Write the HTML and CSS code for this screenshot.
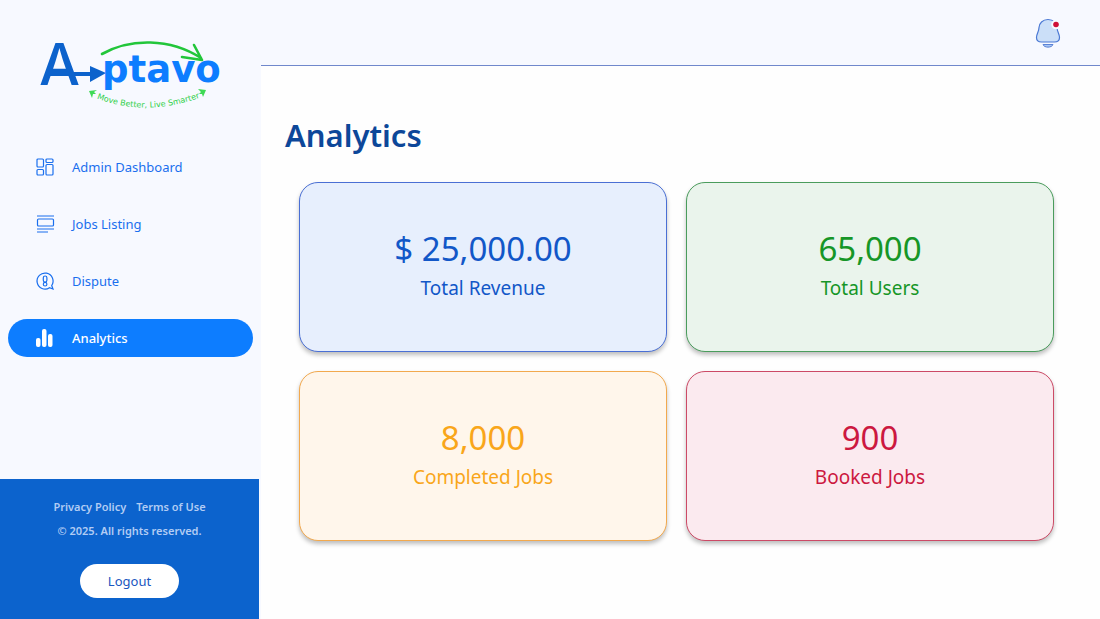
FILE: index.html
```html
<!DOCTYPE html>
<html lang="en">
<head>
<meta charset="utf-8">
<meta name="viewport" content="width=device-width, initial-scale=1">
<title>Aptavo – Analytics</title>
<link rel="stylesheet" href="styles.css">
</head>
<body>
<div class="app">
  <aside class="sidebar">
    <a class="logo" href="#" aria-label="Aptavo home">
      <svg width="200" height="76" viewBox="0 0 200 76">
        <defs><path id="tagline" d="M57 61 Q114 84 175 57"/></defs>
        <path d="M14 36H54V30L70 37L54 46V40H14Z" fill="#0c62cc"/>
        <text class="logo-a" x="3" y="49">A</text>
        <text class="logo-name" x="66" y="46">ptavo</text>
        <path d="M66 18C94 2 134 2 165 22M158 9L166 24L146 21" fill="none" stroke="#22c63a" stroke-width="2.600" stroke-linecap="round" stroke-linejoin="round"/>
        <text class="logo-tagline"><textPath href="#tagline" startOffset="4">Move Better, Live Smarter</textPath></text>
        <path d="M53 55L61 54L58 56L60 58L57 58L56 62ZM170 54L162 53L165 56L163 58L166 58L167 61Z" fill="#3fda55"/>
      </svg>
    </a>
    <nav class="nav" aria-label="Main">
      <a class="nav-item" href="#">
        <svg class="icon" viewBox="0 0 18 18"><rect x="1" y="1" width="6.5" height="8" rx="1"/><rect x="10" y="1" width="7" height="3.5" rx="1"/><rect x="1" y="11.5" width="6.5" height="5.5" rx="1"/><rect x="10" y="6.5" width="7" height="10.5" rx="1"/></svg>
        <span>Admin Dashboard</span>
      </a>
      <a class="nav-item" href="#">
        <svg class="icon" viewBox="0 0 18 18"><path d="M1 1H18M1 14H18M1 17H12"/><rect x="1.5" y="4" width="16" height="7" rx="1"/></svg>
        <span>Jobs Listing</span>
      </a>
      <a class="nav-item" href="#">
        <svg class="icon" viewBox="0 0 18 18"><path d="M13.5 15.700A8 8 0 1 1 15.700 13.500L17 17Z"/><rect x="7.300" y="4" width="3.600" height="6" rx="1.800"/><circle cx="9.100" cy="12.200" r="1.800"/></svg>
        <span>Dispute</span>
      </a>
      <a class="nav-item active" href="#" aria-current="page">
        <svg class="icon solid" viewBox="0 0 18 18"><rect x="0" y="9" width="4.500" height="9" rx="2"/><rect x="6" y="0" width="4.500" height="18" rx="2"/><rect x="12" y="5" width="4.500" height="13" rx="2"/></svg>
        <span>Analytics</span>
      </a>
    </nav>
    <footer class="side-footer">
      <div class="legal"><a href="#">Privacy Policy</a><a href="#">Terms of Use</a></div>
      <p class="copyright">© 2025. All rights reserved.</p>
      <button class="logout" type="button">Logout</button>
    </footer>
  </aside>
  <header class="topbar">
    <button class="bell" type="button" aria-label="Notifications">
      <svg width="28" height="32" viewBox="0 0 28 32">
        <path d="M9 27.5H19C18 31 10 31 9 27.5Z" fill="#a9c6f2" stroke="#5b82d6"/>
        <path d="M14 2.500C8.500 2.500 5.200 6.400 5 10.500C4.900 15 2.500 17 2.500 20.500C2.500 23.500 4.500 25 7.500 25H20.500C23.500 25 25.500 23.500 25.500 20.500C25.500 17 23.100 15 23 10.500C22.800 6.400 19.500 2.500 14 2.500Z" fill="#cbdff8" stroke="#4a78d4" stroke-width="1.200"/>
        <circle cx="22" cy="7.500" r="4.800" fill="#f7f9ff"/>
        <circle cx="22" cy="7.500" r="2.800" fill="#cf1038"/>
      </svg>
    </button>
  </header>
  <main class="content">
    <h1 class="title">Analytics</h1>
    <div class="cards">
      <section class="card blue"><p class="value">$ 25,000.00</p><h2 class="label">Total Revenue</h2></section>
      <section class="card green"><p class="value">65,000</p><h2 class="label">Total Users</h2></section>
      <section class="card orange"><p class="value">8,000</p><h2 class="label">Completed Jobs</h2></section>
      <section class="card red"><p class="value">900</p><h2 class="label">Booked Jobs</h2></section>
    </div>
  </main>
</div>
</body>
</html>
```

FILE: styles.css
```css
* {
  box-sizing: border-box;
}

body {
  margin: 0;
  font-family: "Noto Sans", "Open Sans", sans-serif;
  background: #fefefe;
}

h1, h2, p {
  margin: 0;
}

a {
  text-decoration: none;
}

button {
  border: 0;
  font: inherit;
  cursor: pointer;
}

.app {
  display: grid;
  grid-template-columns: 261px 1fr;
  grid-template-rows: auto 1fr;
  min-height: 100vh;
}

.sidebar {
  grid-row: 1 / 3;
  display: flex;
  flex-direction: column;
  background: #f7f9ff;
}

.logo {
  display: block;
  margin: 36px 0 36px 36px;
}

.logo svg {
  display: block;
}

.logo-a {
  font: 500 58px Inter, sans-serif;
  fill: #0c62cc;
}

.logo-name {
  font: bold 37px "DejaVu Sans", sans-serif;
  fill: #0d7dff;
}

.logo-tagline {
  font: 8px "DejaVu Sans", sans-serif;
  fill: #2fd048;
}

.nav {
  display: flex;
  flex-direction: column;
  gap: 19px;
  padding: 0 8px;
}

.nav-item {
  display: flex;
  align-items: center;
  gap: 18px;
  height: 38px;
  padding-left: 28px;
  border-radius: 19px;
  color: #1a6fee;
  font-size: 13px;
}

.nav-item.active {
  background: #0d7dff;
  color: #fff;
  font-weight: 500;
}

.icon {
  width: 18px;
  height: 18px;
  overflow: visible;
  fill: none;
  stroke: currentColor;
  stroke-width: 1.2;
}

.icon.solid {
  fill: currentColor;
  stroke: none;
}

.side-footer {
  display: flex;
  flex-direction: column;
  align-items: center;
  margin: auto 2px 0 0;
  padding: 16px 16px 21px;
  background: #0c63cd;
  color: #b2ccf4;
  font-size: 11px;
  font-weight: 600;
  line-height: 24px;
}

.legal {
  display: flex;
  gap: 10px;
}

.legal a {
  color: inherit;
}

.logout {
  height: 34px;
  margin-top: 21px;
  padding: 0 28px;
  border-radius: 17px;
  background: #fff;
  color: #1a56c0;
  font-size: 13px;
  font-weight: 400;
}

.topbar {
  display: flex;
  justify-content: flex-end;
  align-items: center;
  height: 66px;
  padding-right: 38px;
  border-bottom: 1px solid #7088cc;
  background: #f7f9ff;
}

.bell {
  padding: 0;
  background: none;
}

.bell svg {
  display: block;
}

.content {
  padding: 47px 46px 32px 24px;
}

.title {
  color: #0d4799;
  font-size: 31px;
  font-weight: 600;
  line-height: 44px;
}

.cards {
  display: grid;
  grid-template-columns: 1fr 1fr;
  gap: 19px;
  margin: 25px 0 0 14px;
}

.card {
  display: flex;
  flex-direction: column;
  align-items: center;
  justify-content: center;
  min-height: 170px;
  padding-bottom: 2px;
  border: 1px solid;
  border-radius: 19px;
  box-shadow: 0 3px 4px rgba(0, 0, 0, 0.25);
}

.value {
  font-size: 33px;
  line-height: 44px;
}

.label {
  font-size: 19px;
  font-weight: 400;
  line-height: 34px;
}

.blue {
  border-color: #4a6fd4;
  background: #e7effd;
  color: #1257c8;
}

.green {
  border-color: #4a9c5c;
  background: #eaf4ec;
  color: #169627;
}

.orange {
  border-color: #f2a94e;
  background: #fff6eb;
  color: #f9a61a;
}

.red {
  border-color: #cc4a66;
  background: #fbeaef;
  color: #cc1840;
}
```
